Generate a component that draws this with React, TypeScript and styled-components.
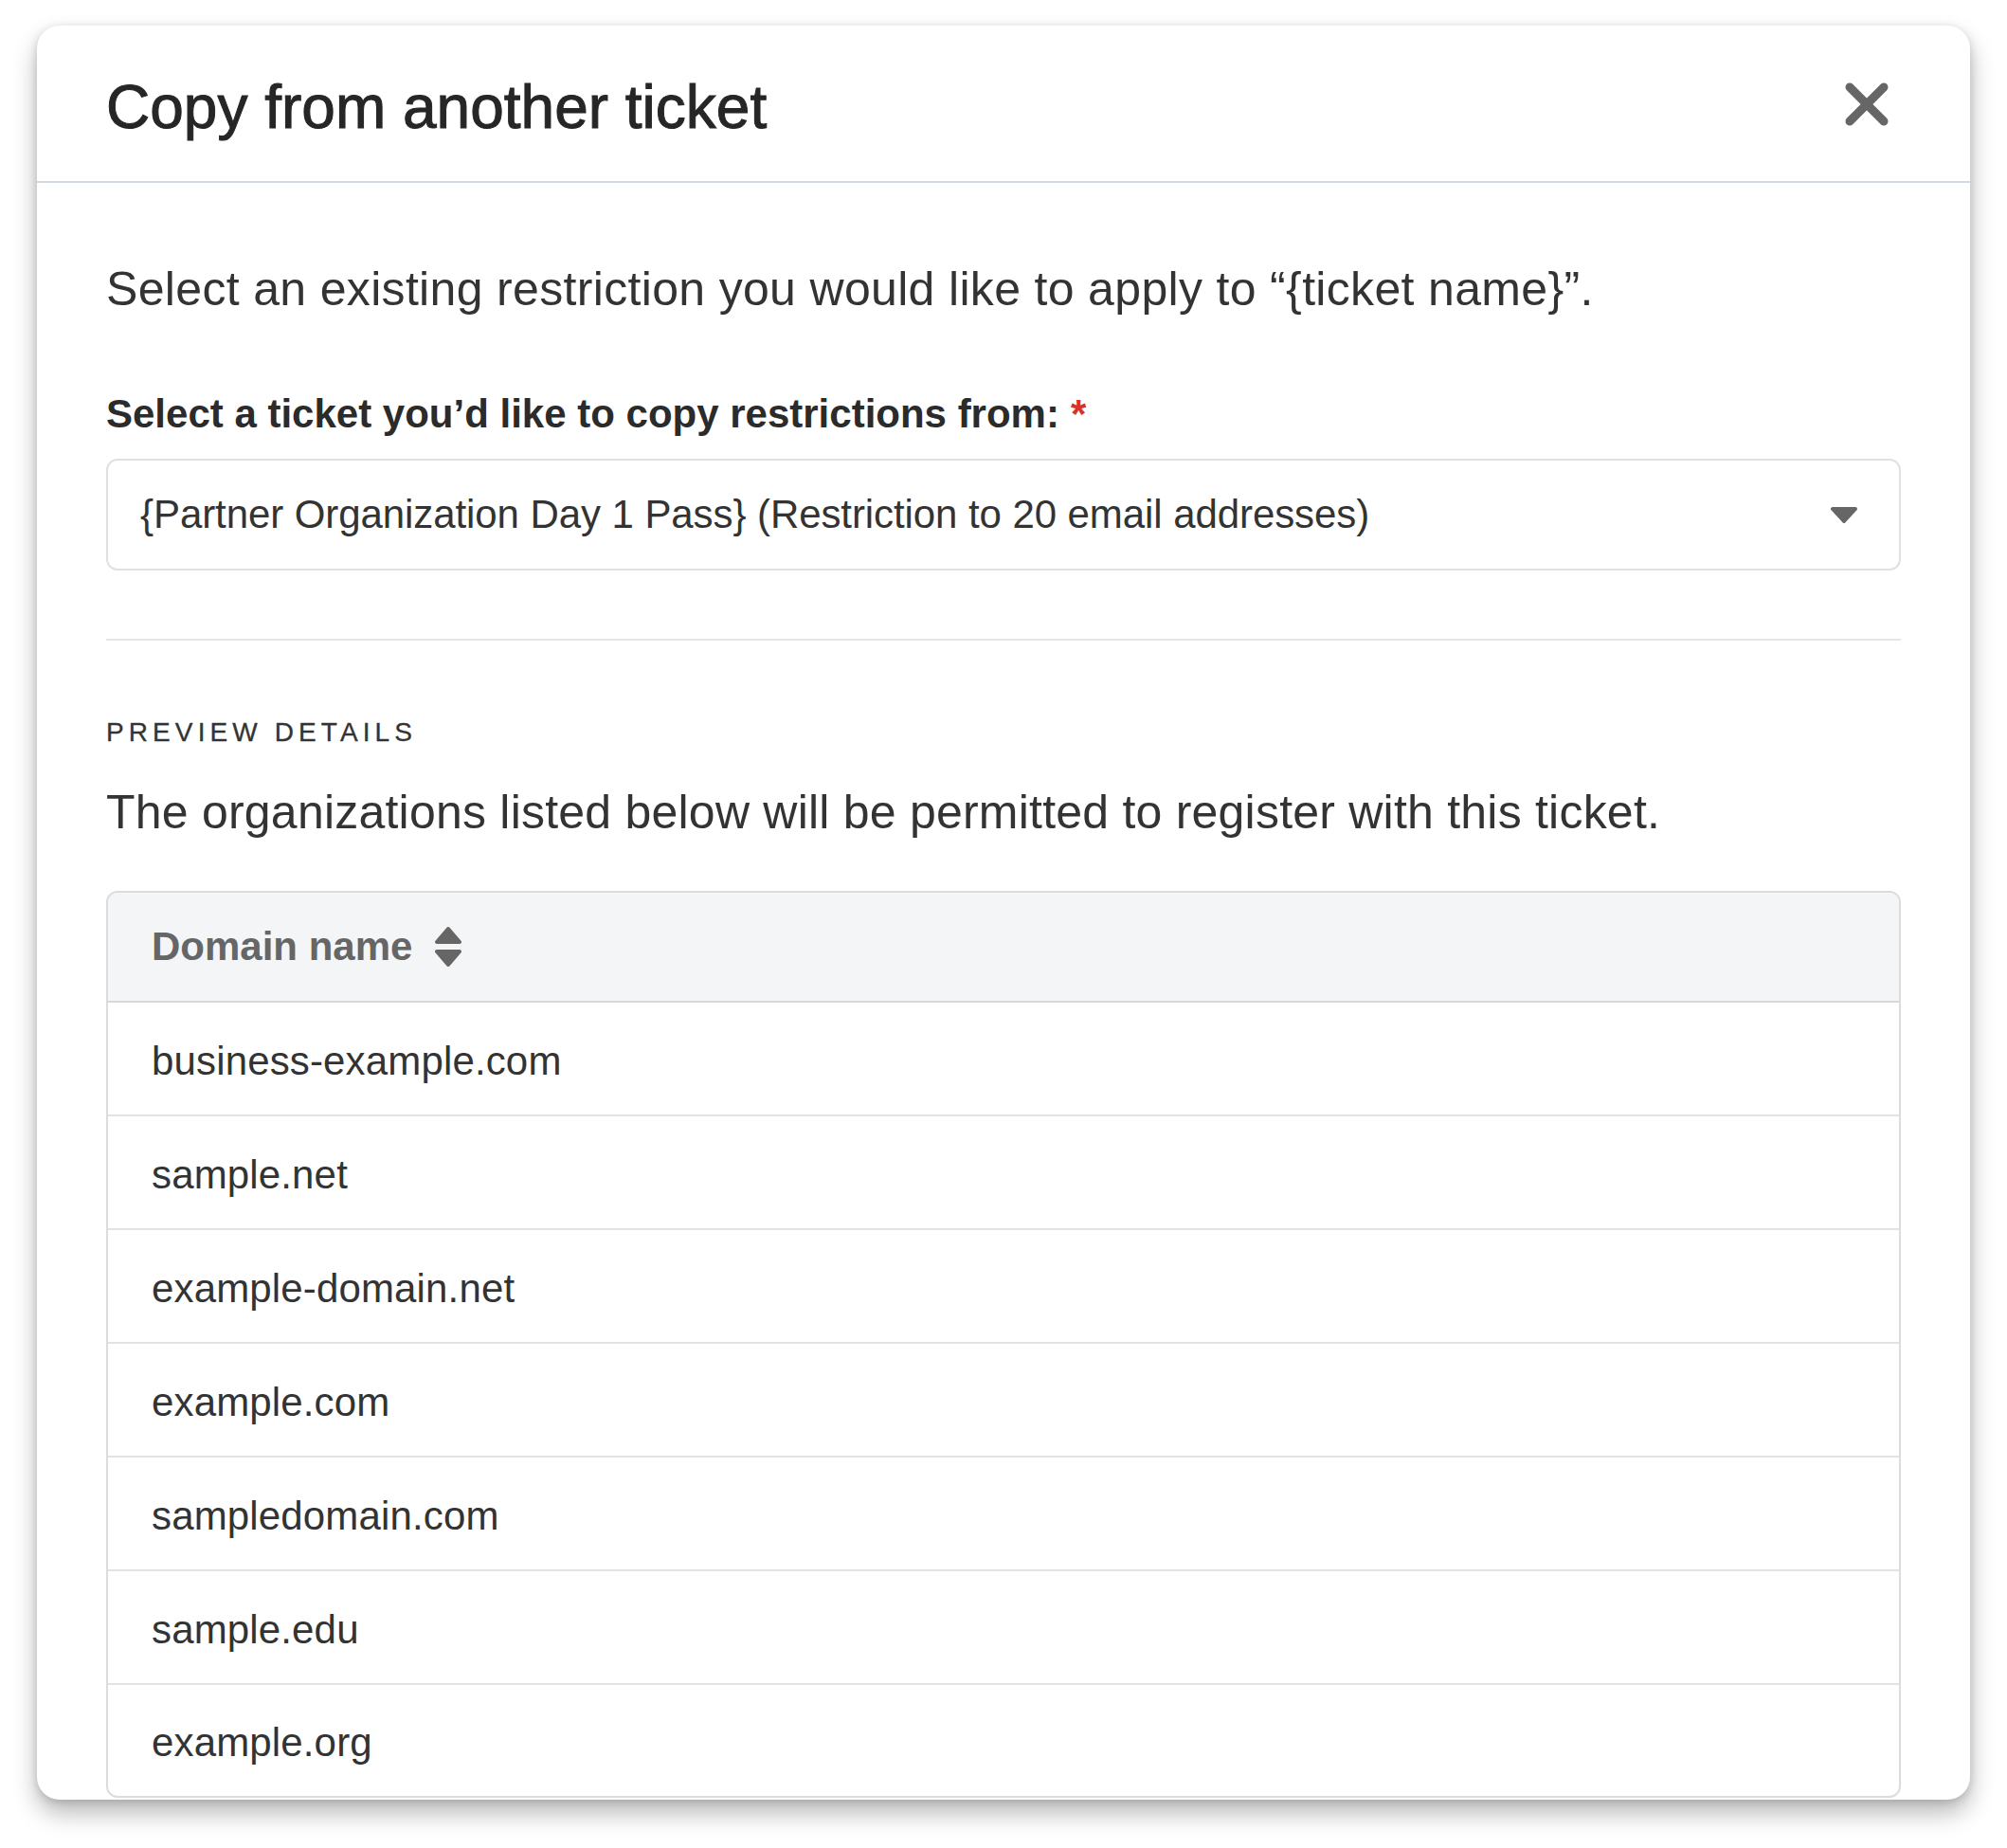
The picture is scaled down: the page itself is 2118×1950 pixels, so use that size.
import styled, { createGlobalStyle } from "styled-components";

const GlobalStyle = createGlobalStyle`
  html, body {
    margin: 0;
    background: #ffffff;
  }
  body {
    font-family: "Liberation Sans", Arial, sans-serif;
    color: #333333;
  }
`;

const Page = styled.div`
  width: 2118px;
  box-sizing: border-box;
  padding: 27px 39px 60px;
`;

const Modal = styled.section`
  width: 2040px;
  background: #ffffff;
  border-radius: 24px;
  overflow: hidden;
  box-shadow: 0 14px 26px rgba(0, 0, 0, 0.28), 0 2px 10px rgba(0, 0, 0, 0.14);
`;

const Header = styled.header`
  display: flex;
  align-items: center;
  justify-content: space-between;
  height: 166px;
  box-sizing: border-box;
  padding: 0 86px 0 73px;
  border-bottom: 2px solid #d3d9e2;
`;

const Title = styled.h1`
  margin: 0;
  padding-top: 9px;
  font-size: 64px;
  font-weight: 400;
  line-height: 1.15;
  color: #262626;
  -webkit-text-stroke: 1px #262626;
`;

const CloseButton = styled.button`
  display: flex;
  margin-top: 2px;
  padding: 0;
  border: 0;
  background: none;
  cursor: pointer;
`;

const Body = styled.div`
  padding: 76px 73px 2px;
`;

const Intro = styled.p`
  margin: 0;
  font-size: 50px;
  line-height: 72px;
  letter-spacing: 0.33px;
  color: #333333;
`;

const Label = styled.label`
  display: block;
  margin: 68px 0 19px;
  font-size: 42px;
  font-weight: 700;
  line-height: 56px;
  color: #2b2b2b;
`;

const Required = styled.span`
  margin-left: 12px;
  color: #d8322a;
`;

const SelectBox = styled.div`
  display: flex;
  align-items: center;
  justify-content: space-between;
  height: 118px;
  box-sizing: border-box;
  padding: 0 43px 0 34px;
  border: 2px solid #e0e0e0;
  border-radius: 12px;
  font-size: 42px;
  line-height: 48px;
  letter-spacing: -0.08px;
  color: #333333;
`;

const Divider = styled.hr`
  margin: 72px 0 0;
  border: 0;
  border-top: 2px solid #e6e6e6;
`;

const Eyebrow = styled.h2`
  margin: 77px 0 0;
  font-size: 28px;
  font-weight: 400;
  line-height: 40px;
  letter-spacing: 5.1px;
  text-transform: uppercase;
  color: #333333;
  -webkit-text-stroke: 0.3px #333333;
`;

const Description = styled(Intro)`
  margin-top: 28px;
  letter-spacing: 0.22px;
`;

const Table = styled.div`
  margin-top: 47px;
  border: 2px solid #dcdcdc;
  border-radius: 12px;
  overflow: hidden;
`;

const HeadRow = styled.div`
  display: flex;
  align-items: center;
  height: 116px;
  box-sizing: border-box;
  padding-left: 46px;
  background: #f4f5f7;
  border-bottom: 2px solid #d8d8d8;
  font-size: 42px;
  font-weight: 700;
  color: #666666;
`;

const SortIcon = styled.svg`
  margin-left: 23px;
`;

const Row = styled.div`
  display: flex;
  align-items: center;
  height: 120px;
  box-sizing: border-box;
  padding: 5px 0 0 46px;
  border-bottom: 2px solid #e2e2e2;
  font-size: 42px;
  letter-spacing: 0.15px;
  color: #333333;

  &:last-child {
    height: 117px;
    border-bottom: 0;
  }
`;

const domains = [
  "business-example.com",
  "sample.net",
  "example-domain.net",
  "example.com",
  "sampledomain.com",
  "sample.edu",
  "example.org",
];

export default function App() {
  return (
    <>
      <GlobalStyle />
      <Page>
        <Modal>
          <Header>
            <Title>Copy from another ticket</Title>
            <CloseButton aria-label="Close">
              <svg width="46" height="46" viewBox="0 0 46 46">
                <path
                  d="M5 5L41 41M41 5L5 41"
                  stroke="#666666"
                  strokeWidth="9"
                  strokeLinecap="round"
                  fill="none"
                />
              </svg>
            </CloseButton>
          </Header>
          <Body>
            <Intro>
              Select an existing restriction you would like to apply to “{"{"}ticket name{"}"}”.
            </Intro>
            <Label>
              Select a ticket you’d like to copy restrictions from:
              <Required>*</Required>
            </Label>
            <SelectBox>
              <span>
                {"{"}Partner Organization Day 1 Pass{"}"} (Restriction to 20 email addresses)
              </span>
              <svg width="30" height="18" viewBox="0 0 30 18">
                <path
                  d="M3 3H27L15 16Z"
                  fill="#666666"
                  stroke="#666666"
                  strokeWidth="4"
                  strokeLinejoin="round"
                />
              </svg>
            </SelectBox>
            <Divider />
            <Eyebrow>Preview details</Eyebrow>
            <Description>
              The organizations listed below will be permitted to register with this ticket.
            </Description>
            <Table>
              <HeadRow>
                Domain name
                <SortIcon width="30" height="44" viewBox="0 0 30 44">
                  <path
                    d="M15 3L27 17H3Z M3 27H27L15 41Z"
                    fill="#666666"
                    stroke="#666666"
                    strokeWidth="4"
                    strokeLinejoin="round"
                  />
                </SortIcon>
              </HeadRow>
              {domains.map((d) => (
                <Row key={d}>{d}</Row>
              ))}
            </Table>
          </Body>
        </Modal>
      </Page>
    </>
  );
}
